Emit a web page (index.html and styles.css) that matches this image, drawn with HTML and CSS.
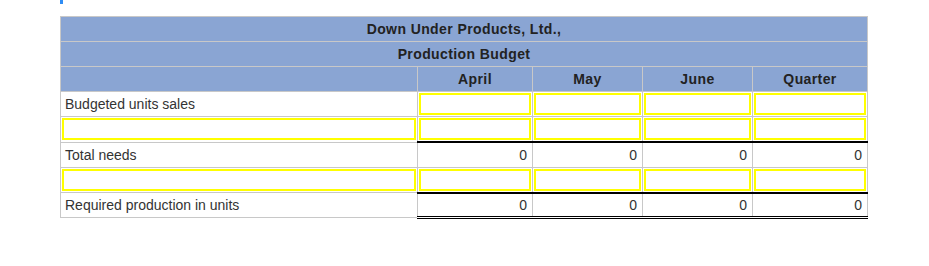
FILE: index.html
```html
<!DOCTYPE html>
<html>
<head>
<link rel="stylesheet" href="styles.css">
<title>Production Budget</title>
</head>
<body>
<div class="marker"></div>
<div id="main">
<table class="budget">
  <colgroup>
    <col class="c-label">
    <col class="c-wide">
    <col class="c-mid">
    <col class="c-mid">
    <col class="c-wide">
  </colgroup>
  <tr class="head"><th colspan="5">Down Under Products, Ltd.,</th></tr>
  <tr class="head"><th colspan="5">Production Budget</th></tr>
  <tr class="head">
    <th></th><th>April</th><th>May</th><th>June</th><th>Quarter</th>
  </tr>
  <tr>
    <td class="label">Budgeted units sales</td>
    <td class="entry"><input type="text"></td>
    <td class="entry"><input type="text"></td>
    <td class="entry"><input type="text"></td>
    <td class="entry"><input type="text"></td>
  </tr>
  <tr>
    <td class="entry"><input type="text"></td>
    <td class="entry"><input type="text"></td>
    <td class="entry"><input type="text"></td>
    <td class="entry"><input type="text"></td>
    <td class="entry"><input type="text"></td>
  </tr>
  <tr>
    <td class="label">Total needs</td>
    <td class="num total">0</td>
    <td class="num total">0</td>
    <td class="num total">0</td>
    <td class="num total">0</td>
  </tr>
  <tr>
    <td class="entry"><input type="text"></td>
    <td class="entry"><input type="text"></td>
    <td class="entry"><input type="text"></td>
    <td class="entry"><input type="text"></td>
    <td class="entry"><input type="text"></td>
  </tr>
  <tr>
    <td class="label">Required production in units</td>
    <td class="num total final">0</td>
    <td class="num total final">0</td>
    <td class="num total final">0</td>
    <td class="num total final">0</td>
  </tr>
</table>
</div>
</body>
</html>
```

FILE: styles.css
```css
body {
    margin: 0;
    font-family: "Liberation Sans", Arial, sans-serif;
    font-size: 14px;
    color: #333;
    background: #fff;
}

.marker {
    width: 3px;
    height: 4px;
    margin-left: 60px;
    background-color: #2f8df5;
}

#main {
    padding: 12px 0 0 60px;
}

.budget {
    border-collapse: collapse;
    table-layout: fixed;
    width: 808px;
    font: inherit;
}

.c-label { width: 357px; }
.c-wide  { width: 115px; }
.c-mid   { width: 110px; }

.budget th,
.budget td {
    border: 1px solid #c8c8c8;
    height: 25px;
    padding: 0 4px;
    box-sizing: border-box;
}

.head th {
    background-color: #8aa5d3;
    color: #222;
    font-weight: bold;
    text-align: center;
    letter-spacing: 0.4px;
}

.budget .label {
    text-align: left;
}

.budget .num {
    text-align: right;
    padding-right: 5px;
}

.budget .total {
    border-top: 2px solid #000;
}

.budget .final {
    border-bottom: 3px double #000;
}

.budget .entry {
    padding: 1px;
}

.entry input {
    display: block;
    width: 100%;
    height: 22px;
    box-sizing: border-box;
    border: 2px solid #ffff00;
    margin: 0;
    padding: 0 4px;
    font: inherit;
    background: #fff;
}
```
